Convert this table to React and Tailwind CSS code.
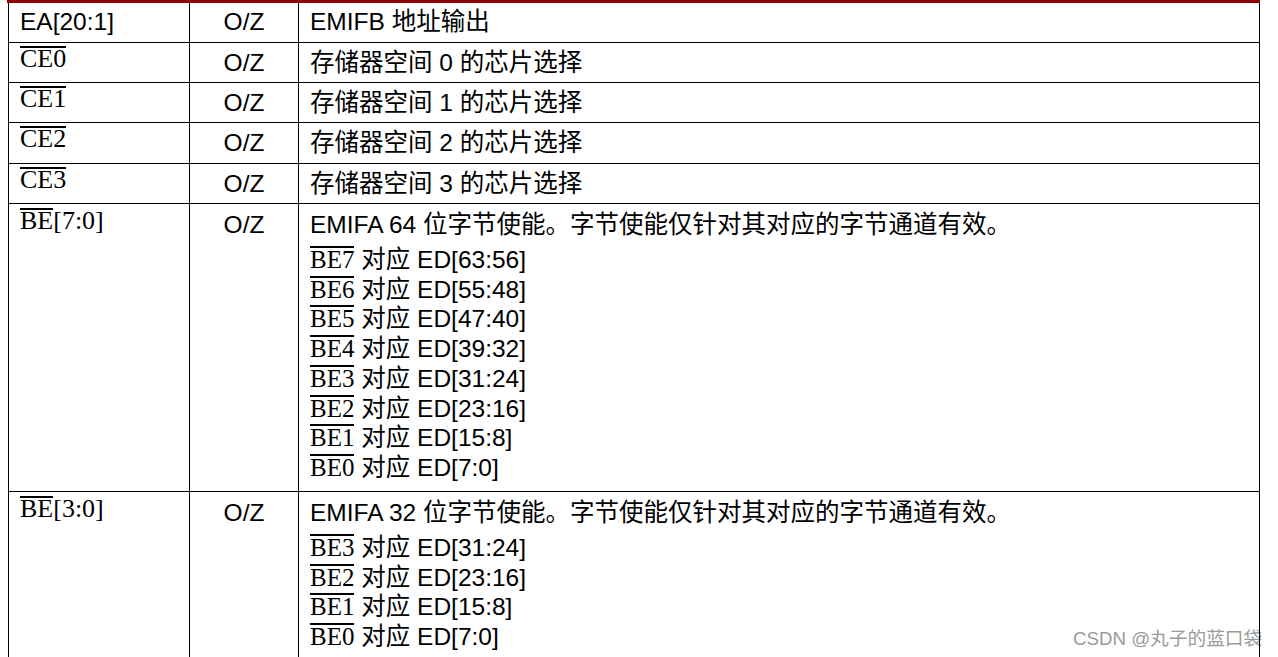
import React from "react";

const SANS = "font-['Liberation_Sans','Noto_Sans_CJK_SC',sans-serif]";
const SERIF = "font-['Liberation_Serif','Noto_Sans_CJK_SC',serif]";

function OL({ children, lead = "leading-[22px]" }) {
  return (
    <span className={`inline-block border-t-2 border-black ${lead} ${SERIF}`}>
      {children}
    </span>
  );
}

function Row({ h, pt, c1pt, c1, c2, c3, last }) {
  return (
    <div className={`flex ${h} ${last ? "" : "border-b border-black"}`}>
      <div className={`w-[180px] shrink-0 pl-[11px] ${c1pt}`}>{c1}</div>
      <div className={`w-[109px] shrink-0 border-l border-black text-center ${pt}`}>{c2}</div>
      <div className={`flex-1 border-l border-black pl-[11px] ${pt}`}>{c3}</div>
    </div>
  );
}

function BELine({ n, ed }) {
  return (
    <div className="leading-[29.7px]">
      <span className="text-[25px]">
        <OL lead="leading-[23px]">{`BE${n}`}</OL>
      </span>{" "}
      对应 ED[{ed}]
    </div>
  );
}

const be64 = [
  [7, "63:56"],
  [6, "55:48"],
  [5, "47:40"],
  [4, "39:32"],
  [3, "31:24"],
  [2, "23:16"],
  [1, "15:8"],
  [0, "7:0"],
];
const be32 = be64.slice(4);

function SerifCell({ children }) {
  return <span className={`text-[26px] ${SERIF}`}>{children}</span>;
}

export default function App() {
  return (
    <div className={`relative w-[1278px] h-[657px] overflow-hidden bg-white text-black text-[24.5px] leading-[30px] ${SANS}`}>
      <div className="absolute left-[1073px] top-[628px] z-0 whitespace-nowrap text-[18.7px] leading-[22px] text-[#9a9a9a]">
        CSDN @丸子的蓝口袋
      </div>
      <div className="relative z-10">
        <div className="ml-[7px] h-[3px] w-[1253px] bg-[#8b0000]" />
        <div className="ml-[8px] w-[1252px] border-l border-r border-black">
          <Row h="h-[40px]" pt="pt-[4px]" c1pt="pt-[4px]" c1="EA[20:1]" c2="O/Z" c3="EMIFB 地址输出" />
          {[0, 1, 2, 3].map((i) => (
            <Row
              key={i}
              h={i === 2 ? "h-[41px]" : "h-[40px]"}
              pt="pt-[5px]"
              c1pt="pt-[1px]"
              c1={
                <SerifCell>
                  <OL lead="leading-[21px]">{`CE${i}`}</OL>
                </SerifCell>
              }
              c2="O/Z"
              c3={`存储器空间 ${i} 的芯片选择`}
            />
          ))}
          <Row
            h="h-[288px]"
            pt="pt-[6px]"
            c1pt="pt-[2px]"
            c1={
              <SerifCell>
                <OL lead="leading-[21px]">BE</OL>[7:0]
              </SerifCell>
            }
            c2="O/Z"
            c3={
              <div>
                <div className="mb-[5px]">EMIFA 64 位字节使能。字节使能仅针对其对应的字节通道有效。</div>
                {be64.map(([n, ed]) => (
                  <BELine key={n} n={n} ed={ed} />
                ))}
              </div>
            }
          />
          <Row
            h="h-[200px]"
            pt="pt-[6px]"
            c1pt="pt-[2px]"
            last
            c1={
              <SerifCell>
                <OL lead="leading-[21px]">BE</OL>[3:0]
              </SerifCell>
            }
            c2="O/Z"
            c3={
              <div>
                <div className="mb-[5px]">EMIFA 32 位字节使能。字节使能仅针对其对应的字节通道有效。</div>
                {be32.map(([n, ed]) => (
                  <BELine key={n} n={n} ed={ed} />
                ))}
              </div>
            }
          />
        </div>
      </div>
    </div>
  );
}
